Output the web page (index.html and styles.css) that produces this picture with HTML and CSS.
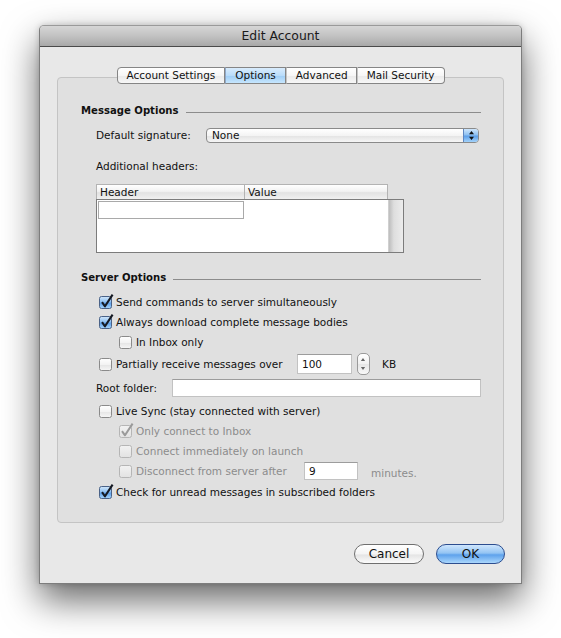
FILE: index.html
```html
<!DOCTYPE html>
<html lang="en">

<head>
    <meta charset="UTF-8">
    <meta name="viewport" content="width=device-width,initial-scale=1.0">
    <title>Edit Account</title>
    <link rel="stylesheet" href="styles.css">
</head>

<body>
    <!-- shared gradients + checkbox glyphs -->
    <svg class="defs" width="0" height="0">
        <defs>
            <linearGradient id="aqua" x1="0" y1="0" x2="0" y2="1">
                <stop offset="0" stop-color="#d3e8fb" />
                <stop offset="0.45" stop-color="#8fc0f1" />
                <stop offset="0.55" stop-color="#5d9fe8" />
                <stop offset="1" stop-color="#a8d6fb" />
            </linearGradient>
            <linearGradient id="plain" x1="0" y1="0" x2="0" y2="1">
                <stop offset="0" stop-color="#ffffff" />
                <stop offset="0.5" stop-color="#f3f3f3" />
                <stop offset="0.55" stop-color="#e6e6e6" />
                <stop offset="1" stop-color="#f7f7f7" />
            </linearGradient>
            <linearGradient id="dim" x1="0" y1="0" x2="0" y2="1">
                <stop offset="0" stop-color="#f2f2f2" />
                <stop offset="1" stop-color="#e2e2e2" />
            </linearGradient>
            <symbol id="cb-on" viewBox="0 0 16 16">
                <rect x="1.5" y="3.5" width="12" height="12" rx="2" fill="url(#aqua)" stroke="#4a6287" />
                <path d="M4 9.2 L7 13.3 L14.6 1.6" fill="none" stroke="#151a24" stroke-width="2.1" stroke-linejoin="round" />
            </symbol>
            <symbol id="cb-off" viewBox="0 0 16 16">
                <rect x="1.5" y="3.5" width="12" height="12" rx="2" fill="url(#plain)" stroke="#8a8a8a" />
            </symbol>
            <symbol id="cb-dim-on" viewBox="0 0 16 16">
                <rect x="1.5" y="3.5" width="12" height="12" rx="2" fill="url(#dim)" stroke="#b5b5b5" />
                <path d="M4 9.2 L7 13.3 L14.6 1.6" fill="none" stroke="#9a9a9a" stroke-width="2" stroke-linejoin="round" />
            </symbol>
            <symbol id="cb-dim-off" viewBox="0 0 16 16">
                <rect x="1.5" y="3.5" width="12" height="12" rx="2" fill="url(#dim)" stroke="#b5b5b5" />
            </symbol>
        </defs>
    </svg>

    <div class="window">
        <div class="title-bar">Edit Account</div>

        <div class="window-body">
            <div class="tabs">
                <span class="tab">Account Settings</span>
                <span class="tab active">Options</span>
                <span class="tab">Advanced</span>
                <span class="tab">Mail Security</span>
            </div>

            <div class="tab-box">
                <!-- Message Options -->
                <div class="group-title"><span>Message Options</span><i class="rule"></i></div>
                <div class="indent">
                    <div class="row sig-row">
                        <span class="sig-label">Default signature:</span>
                        <div class="popup">
                            <span class="popup-value">None</span>
                            <span class="popup-arrows">
                                <svg width="7" height="11" viewBox="0 0 7 11">
                                    <path d="M3.5 1 L6 4.3 L1 4.3 Z M3.5 10 L6 6.7 L1 6.7 Z" fill="#111" />
                                </svg>
                            </span>
                        </div>
                    </div>
                    <div class="row label-row">Additional headers:</div>
                    <div class="headers-table">
                        <div class="table-head">
                            <div class="col col-header">Header</div>
                            <div class="col col-value">Value</div>
                        </div>
                        <div class="table-body">
                            <div class="cells">
                                <div class="edit-cell"></div>
                            </div>
                            <div class="scroller"></div>
                        </div>
                    </div>
                </div>

                <!-- Server Options -->
                <div class="group-title server-title"><span>Server Options</span><i class="rule"></i></div>
                <div class="indent">
                    <div class="row check first">
                        <svg class="cb"><use href="#cb-on" /></svg>Send commands to server simultaneously
                    </div>
                    <div class="row check">
                        <svg class="cb"><use href="#cb-on" /></svg>Always download complete message bodies
                    </div>
                    <div class="row check sub">
                        <svg class="cb"><use href="#cb-off" /></svg>In Inbox only
                    </div>
                    <div class="row check tall">
                        <svg class="cb"><use href="#cb-off" /></svg>
                        <span class="partial-label">Partially receive messages over</span>
                        <span class="field field-size">100</span>
                        <span class="stepper">
                            <svg width="13" height="22" viewBox="0 0 13 22">
                                <path d="M6.5 4.5 L8.8 7.8 L4.2 7.8 Z M6.5 17.5 L8.8 14.2 L4.2 14.2 Z" fill="#666" />
                            </svg>
                        </span>
                        <span class="unit">KB</span>
                    </div>
                    <div class="row tall root-row">
                        <span class="root-label">Root folder:</span>
                        <span class="field field-root"></span>
                    </div>
                    <div class="row check live-row">
                        <svg class="cb"><use href="#cb-off" /></svg>Live Sync (stay connected with server)
                    </div>
                    <div class="row check sub disabled">
                        <svg class="cb"><use href="#cb-dim-on" /></svg>Only connect to Inbox
                    </div>
                    <div class="row check sub disabled">
                        <svg class="cb"><use href="#cb-dim-off" /></svg>Connect immediately on launch
                    </div>
                    <div class="row check sub disabled">
                        <svg class="cb"><use href="#cb-dim-off" /></svg>
                        <span class="disconnect-label">Disconnect from server after</span>
                        <span class="field field-minutes">9</span>
                        <span class="unit minutes">minutes.</span>
                    </div>
                    <div class="row check last">
                        <svg class="cb"><use href="#cb-on" /></svg>Check for unread messages in subscribed folders
                    </div>
                </div>
            </div>

            <div class="action-btns">
                <button class="btn cancel-btn">Cancel</button>
                <button class="btn ok-btn">OK</button>
            </div>
        </div>
    </div>
</body>

</html>
```

FILE: styles.css
```css
/* Basic reset */
* {
    margin: 0;
    padding: 0;
    box-sizing: border-box;
}

html,
body {
    height: 100%;
    background-color: #fff;
    font-family: 'DejaVu Sans', 'Liberation Sans', sans-serif;
    font-size: 10.5px;
    color: #111;
}

.defs {
    display: block;
    height: 0;
    overflow: hidden;
}

/* Sheet window */
.window {
    width: 483px;
    margin: 25px 0 0 39px;
    border: 1px solid #7d7d7d;
    border-top-color: #9a9a9a;
    border-radius: 5px 5px 0 0;
    background-color: #e8e8e8;
    box-shadow: 0 16px 36px rgba(0, 0, 0, 0.6), 0 0 6px rgba(0, 0, 0, 0.18);
}

.title-bar {
    height: 21px;
    line-height: 20px;
    text-align: center;
    font-size: 12.4px;
    color: #1a1a1a;
    background: linear-gradient(#d6d6d6, #c2c2c2 50%, #a8a8a8);
    border-bottom: 1px solid #4a4a4a;
    border-radius: 4px 4px 0 0;
}

.window-body {
    padding: 20px 17px 19px;
}

/* Segmented tab control */
.tabs {
    position: relative;
    z-index: 1;
    display: flex;
    justify-content: center;
    margin-bottom: -7px;
}

.tab {
    height: 17px;
    line-height: 15px;
    padding: 0 8.5px;
    border: 1px solid #858585;
    border-left: none;
    background: linear-gradient(#ffffff, #f6f6f6 50%, #ebebeb 55%, #f7f7f7);
}

.tab:first-child {
    border-left: 1px solid #858585;
    border-radius: 4px 0 0 4px;
    padding-left: 9px;
}

.tab:last-child {
    border-radius: 0 4px 4px 0;
    padding-right: 9px;
}

.tab + .tab {
    border-left: 1px solid #c4c4c4;
}

.tab.active {
    padding: 0 9.5px;
    border-left-color: #8fa8c8;
    background: linear-gradient(#d9ecfd, #b9dcfa 50%, #a1cff6 55%, #c6e6fe);
}

.tab-box {
    height: 446px;
    padding: 24px 22px 0 23px;
    border: 1px solid #c4c4c4;
    border-radius: 4px;
    background-color: #e0e0e0;
}

/* Section headings with a rule */
.group-title {
    display: flex;
    align-items: center;
    height: 16px;
    font-weight: bold;
    font-size: 10.1px;
}

.group-title .rule {
    flex: 1;
    height: 1px;
    margin: 4px 0 0 7px;
    background-color: #8c8c8c;
}

.server-title {
    margin-top: 16px;
}

.indent {
    margin-left: 15px;
}

.row {
    display: flex;
    align-items: center;
    height: 20px;
    white-space: nowrap;
}

/* Signature popup */
.sig-row {
    margin-top: 7px;
}

.sig-label {
    width: 110px;
}

.popup {
    flex: 1;
    display: flex;
    height: 15px;
    margin-right: 2px;
    border: 1px solid #8a8a8a;
    border-radius: 4px;
    background: linear-gradient(#ffffff, #f4f4f4 50%, #e4e4e4 55%, #f6f6f6);
    overflow: hidden;
}

.popup-value {
    flex: 1;
    padding-left: 5px;
    line-height: 13px;
}

.popup-arrows {
    width: 15px;
    display: flex;
    align-items: center;
    justify-content: center;
    border-left: 1px solid #5f86c0;
    background: linear-gradient(#cfe6fc, #8ec0f1 45%, #5d9fe8 55%, #a3d3fb);
}

.label-row {
    height: 16px;
    margin-top: 13px;
}

/* Additional headers table */
.headers-table {
    margin-top: 10px;
    width: 308px;
}

.table-head {
    display: flex;
    width: 292px;
    height: 15px;
    border: 1px solid #b3b3b3;
    border-bottom: none;
    background: linear-gradient(#ffffff, #f2f2f2 45%, #e2e2e2 55%, #f0f0f0);
}

.col {
    line-height: 14px;
    padding-left: 3px;
}

.col-header {
    width: 148px;
    border-right: 1px solid #b3b3b3;
}

.table-body {
    display: flex;
    height: 54px;
    border: 1px solid #7c7c7c;
    background-color: #fff;
}

.cells {
    flex: 1;
    padding: 1px 0 0 1px;
}

.edit-cell {
    width: 146px;
    height: 18px;
    border: 1px solid #a9a9a9;
}

.scroller {
    width: 15px;
    border-left: 1px solid #d0d0d0;
    background: linear-gradient(to right, #bdbdbd, #dedede 35%, #ececec);
}

/* Checkbox rows */
.cb {
    width: 16px;
    height: 16px;
    flex: none;
    margin: 0 2px 3px 2px;
}

.check.first {
    margin-top: 7px;
}

.check.sub {
    padding-left: 20px;
}

.tall {
    height: 22px;
}

.check.tall {
    margin-top: 1px;
}

.partial-label {
    width: 181px;
}

.disconnect-label {
    width: 168px;
}

.disabled {
    color: #8c8c8c;
}

/* Text fields */
.field {
    height: 20px;
    line-height: 18px;
    padding-left: 4px;
    color: #111;
    background-color: #fff;
    border: 1px solid #c2c2c2;
    border-top-color: #9c9c9c;
}

.field-size {
    width: 55px;
}

.field-minutes {
    width: 54px;
    height: 18px;
    line-height: 16px;
}

.field-root {
    flex: 1;
    height: 18px;
}

.root-row {
    margin-top: 2px;
}

.root-label {
    width: 76px;
}

.stepper {
    display: flex;
    width: 13px;
    height: 22px;
    margin-left: 5px;
    border: 1px solid #9a9a9a;
    border-radius: 5px;
    background: linear-gradient(#ffffff, #f0f0f0 50%, #e6e6e6 52%, #f8f8f8);
    overflow: hidden;
}

.stepper svg {
    margin: -1px 0 0 -1px;
}

.unit {
    margin-left: 12px;
}

.unit.minutes {
    margin-left: 13px;
    padding-top: 3px;
}

.live-row {
    margin-top: 2px;
}

.check.last {
    margin-top: 1px;
}

/* Dialog buttons */
.action-btns {
    display: flex;
    justify-content: flex-end;
    gap: 12px;
    margin-top: 21px;
    margin-right: -1px;
}

.btn {
    height: 20px;
    border-radius: 10px;
    font-family: inherit;
    font-size: 12px;
    color: #111;
    cursor: pointer;
}

.cancel-btn {
    width: 70px;
    border: 1px solid #6f6f6f;
    background: linear-gradient(#ffffff, #f4f4f4 50%, #e4e4e4 55%, #fbfbfb);
}

.ok-btn {
    width: 69px;
    border: 1px solid #2c4d8f;
    background: linear-gradient(#cfe6fd, #93c4f3 45%, #5ea2ec 55%, #aad7fc);
}
```
